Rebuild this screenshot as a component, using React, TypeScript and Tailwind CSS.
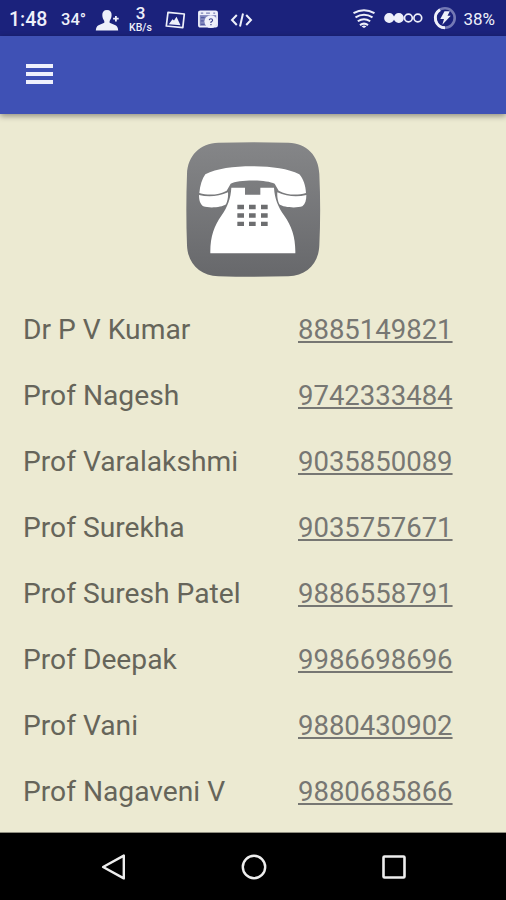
import React from "react";

interface Contact {
  name: string;
  phone: string;
}

const contacts: Contact[] = [
  { name: "Dr P V Kumar", phone: "8885149821" },
  { name: "Prof Nagesh", phone: "9742333484" },
  { name: "Prof Varalakshmi", phone: "9035850089" },
  { name: "Prof Surekha", phone: "9035757671" },
  { name: "Prof Suresh Patel", phone: "9886558791" },
  { name: "Prof Deepak", phone: "9986698696" },
  { name: "Prof Vani", phone: "9880430902" },
  { name: "Prof Nagaveni V", phone: "9880685866" },
];

const StatusBar: React.FC = () => {
  return (
    <div className="flex h-9 shrink-0 items-center justify-between bg-[#1b227c] pl-[9px] pr-[11px] text-[#eef0fa]">
      <div className="flex h-full items-center pt-[3px]">
        <span className="w-[52px] text-[19.5px] font-medium leading-8">1:48</span>
        <span className="w-[34px] text-[16.5px] font-medium leading-8">34°</span>

        {/* Add contact */}
        <svg className="mr-[8px] h-[22px] w-[25px]" viewBox="0 0 25 22" fill="currentColor">
          <path d="M12 1C8.800 1 7.200 3 7.300 6c.1 3 1 4.500 2 6v1.800L3.500 16.300Q1 17.500.8 21.500H23.200Q23 17.500 20.500 16.300L14.600 13.800V12c1-1.500 1.900-3 2-6C16.700 3 15.200 1 12 1z" />
          <path d="M18.100 9.700h5.600M20.900 6.900v5.600" stroke="currentColor" strokeWidth="1.800" />
        </svg>

        {/* Network speed */}
        <div className="flex w-[25px] flex-col items-center">
          <span className="text-[17px] font-medium leading-[17px]">3</span>
          <span className="text-[10.5px] font-medium leading-[12px]">KB/s</span>
        </div>

        {/* Picture */}
        <svg className="ml-[12px] h-[20px] w-[21px]" viewBox="0 0 21 20" fill="none" stroke="currentColor" strokeWidth="1.700">
          <path d="M3 2.300L19.300 4 17.800 17.700 1.300 16z" strokeLinejoin="round" />
          <path d="M3.800 14.200L7.500 9.300 9 10.500 11.500 6.800 15.500 15.200z" fill="currentColor" stroke="none" />
        </svg>

        {/* Calendar */}
        <svg className="ml-[11px] h-[21px] w-[22px]" viewBox="0 0 23 21" fill="none" stroke="currentColor">
          <path d="M2 3.500Q2 2 3.500 2H19.500Q21 2 21 3.500V16.500Q21 18 19.500 18H3.500Q2 18 2 16.500z" fill="#8288bd" strokeWidth="1.800" />
          <path d="M2 4.200H21" strokeWidth="3.400" />
          <path d="M4 3.800h2.500M9.500 3.800h4M17 3.800h2" stroke="#7b81b6" strokeWidth="1.200" />
          <path d="M4 8.500h4M4 12h3M4 15.500h4" stroke="#555ca3" strokeWidth="1.300" />
          <circle cx="14.500" cy="12.700" r="6.700" fill="currentColor" stroke="none" />
          <path d="M12.800 11.200Q13 9.700 14.600 9.700T16.300 11.300Q16.200 12.300 14.600 13.200V14.200M14.600 15.200v1.300" stroke="#3d448c" strokeWidth="1.200" />
        </svg>

        {/* Code */}
        <svg className="ml-[11px] h-[16px] w-[23px]" viewBox="0 0 23 16" fill="none" stroke="currentColor" strokeWidth="2">
          <path d="M6.800 3L2 8l4.800 5M16.200 3L21 8l-4.800 5M13 1.500l-3 13" />
        </svg>
      </div>

      <div className="flex h-full items-center">
        {/* Wi-Fi */}
        <svg className="h-[21px] w-[24px]" viewBox="0 0 24 21" fill="none" stroke="currentColor" strokeWidth="2">
          <path d="M1.500 5.200Q12-.8 22.500 5.200M3.500 9.300Q12 4 20.500 9.300M5.800 13.300Q12 9 18.200 13.300M8 17.100Q12 14.100 16 17.100" />
          <path d="M9.600 18.400Q12 16.500 14.400 18.400L12 20z" fill="currentColor" stroke="none" />
        </svg>

        {/* Signal */}
        <svg className="ml-[8px] h-[12px] w-[39px]" viewBox="0 0 39 12" fill="none" stroke="currentColor" strokeWidth="1.700">
          <circle cx="5.200" cy="6" r="4.200" fill="currentColor" />
          <circle cx="14.800" cy="6" r="4.200" fill="currentColor" />
          <circle cx="24.400" cy="6" r="3.900" />
          <circle cx="33.800" cy="6" r="3.900" />
        </svg>

        {/* Battery */}
        <svg className="ml-[10px] h-[24px] w-[24px]" viewBox="0 0 24 24" fill="none">
          <circle cx="12" cy="12" r="9.700" stroke="#7479b5" strokeWidth="2.600" />
          <path d="M12 21.700A9.700 9.700 0 0 1 7 3.700" stroke="currentColor" strokeWidth="3" />
          <path d="M11.500 5.300H16.800L14.500 9.700H17.800L9.300 18.700L11 13H7.300z" fill="currentColor" />
        </svg>
        <span className="ml-[6px] pt-[2px] text-[17px] leading-8">38%</span>
      </div>
    </div>
  );
};

const TelephoneIcon: React.FC = () => {
  return (
    <svg className="h-[135px] w-[135px]" viewBox="48 37 405 405">
      <defs>
        <linearGradient id="tile" x1="0" y1="0" x2="0" y2="1">
          <stop offset="0" stopColor="#858688" />
          <stop offset="1" stopColor="#67686b" />
        </linearGradient>
      </defs>
      <path
        d="M145 39Q250 36 355 39C410 41 446 77 448 133Q453 240 448 347C446 402 410 438 355 440Q250 443 145 440C90 438 53 402 51 347Q47 240 51 133C53 77 90 41 145 39z"
        fill="url(#tile)"
      />
      {/* Handset */}
      <path
        d="M88 190C90 168 96 148 106 134C140 117 190 110 247 110S354 117 388 134C400 148 407 168 408 190C380 198 350 196 326 183L314 162C290 149 205 149 182 162L170 183C146 196 116 198 88 190z"
        fill="#fff"
      />
      <path
        d="M87 196C116 203 146 200 174 188C175 201 173 213 168 224C156 234 116 236 100 230C90 223 87 211 87 196zM409 196C380 203 350 200 322 188C321 201 323 213 328 224C340 234 380 236 397 230C406 223 409 211 409 196z"
        fill="#fff"
      />
      {/* Body */}
      <path
        d="M184 174H225V195H271V174H312C314 207 324 231 343 258C365 289 377 323 376 371H121C120 323 132 289 154 258C173 231 182 207 184 174z"
        fill="#fff"
      />
      {/* Keys */}
      <path
        d="M202 225h20v14h-20zM237 225h20v14h-20zM273 225h20v14h-20zM202 251h20v13h-20zM237 251h20v13h-20zM273 251h20v13h-20zM202 276h20v13h-20zM237 276h20v13h-20zM273 276h20v13h-20z"
        fill="#6d6e70"
      />
    </svg>
  );
};

const NavigationBar: React.FC = () => {
  return (
    <div className="flex h-[67px] shrink-0 items-center justify-between bg-black pl-[101px] pr-[99px]">
      <svg className="h-[28px] w-[26px]" viewBox="0 0 26 28" fill="none" stroke="#eee" strokeWidth="2.400">
        <path d="M22.800 2.600V25.400L2.100 14z" strokeLinejoin="round" />
      </svg>
      <svg className="h-[26px] w-[26px]" viewBox="0 0 26 26" fill="none" stroke="#eee" strokeWidth="2.400">
        <circle cx="13" cy="13" r="11.200" />
      </svg>
      <svg className="h-[26px] w-[26px]" viewBox="0 0 26 26" fill="none" stroke="#eee" strokeWidth="2.600">
        <rect x="2.500" y="2.500" width="21" height="21" rx="1" />
      </svg>
    </div>
  );
};

const App: React.FC = () => {
  return (
    <div className="flex h-[900px] w-[506px] flex-col overflow-hidden bg-[#ecead2] font-[Roboto,sans-serif]">
      <StatusBar />

      <header className="z-10 flex h-[78px] shrink-0 items-center bg-[#3f51b5] pb-[2px] pl-[26px] shadow-[0_2px_6px_rgba(0,0,0,0.4)]">
        <button className="flex w-[27px] flex-col gap-[4px]" aria-label="Menu">
          <span className="h-[4px] w-full bg-[#eff1fc]" />
          <span className="h-[4px] w-full bg-[#eff1fc]" />
          <span className="h-[4px] w-full bg-[#eff1fc]" />
        </button>
      </header>

      <main className="flex min-h-0 flex-1 flex-col border-b border-[#8f8e80]">
        <div className="flex h-[183px] shrink-0 justify-center pt-[28px]">
          <TelephoneIcon />
        </div>

        {contacts.map((contact) => (
          <div
            key={contact.phone}
            className="flex h-[66px] shrink-0 items-center pl-[23px] text-[27.5px] leading-[66px]"
          >
            <span className="w-[275px] whitespace-nowrap text-[28.2px] text-[#66655a]">{contact.name}</span>
            <span className="text-[#777773] underline decoration-[1.5px] underline-offset-[2px]">
              {contact.phone}
            </span>
          </div>
        ))}
      </main>

      <NavigationBar />
    </div>
  );
};

export default App;
